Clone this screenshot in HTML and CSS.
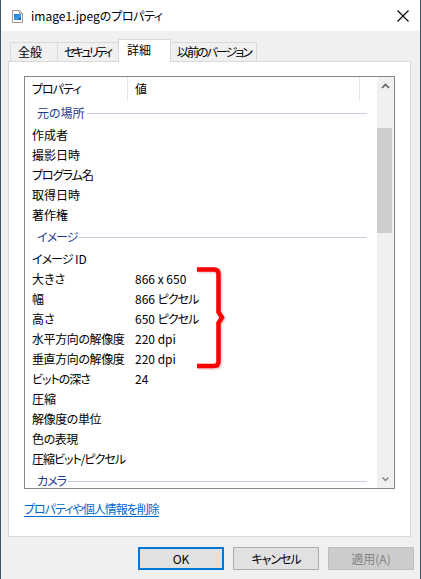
FILE: index.html
```html
<!DOCTYPE html>
<html lang="ja">
<head>
<meta charset="utf-8">
<title>image1.jpegのプロパティ</title>
<link rel="stylesheet" href="styles.css">
</head>
<body>
<div class="window">
  <div class="titlebar">
    <svg class="app-icon" width="11" height="13" viewBox="0 0 11 13">
      <defs>
        <linearGradient id="pic" x1="0" y1="0" x2="1" y2="1">
          <stop offset="0" stop-color="#1f6fd0"/>
          <stop offset="0.6" stop-color="#3aa0e8"/>
          <stop offset="1" stop-color="#0b3f8a"/>
        </linearGradient>
      </defs>
      <path d="M0.5 0.5 H7.5 L10.5 3.5 V12.5 H0.5 Z" fill="#fff" stroke="#9a9a9a"/>
      <path d="M7.5 0.5 V3.5 H10.5" fill="none" stroke="#9a9a9a"/>
      <rect x="2" y="4" width="7" height="6" fill="url(#pic)"/>
    </svg>
    <span class="title">image1.jpegの<span class="kn">プロパティ</span></span>
    <svg class="close" width="12" height="12" viewBox="0 0 12 12">
      <path d="M0.5 0.5 L11.5 11.5 M11.5 0.5 L0.5 11.5" stroke="#000" stroke-width="1.1" fill="none"/>
    </svg>
  </div>
  <div class="client">
    <div class="tabs">
      <div class="tab t1">全般</div>
      <div class="tab t2 kn">セキュリティ</div>
      <div class="tab t3 selected">詳細</div>
      <div class="tab t4 kn">以前のバージョン</div>
    </div>
    <div class="panel">
      <div class="listbox">
        <div class="list">
          <div class="header"><div class="hcol1 kn">プロパティ</div><div class="hcol2">値</div><div class="hcol3"></div></div>
          <div class="group"><span>元の場所</span><i></i></div>
          <div class="row"><span class="k">作成者</span><span class="v"></span></div>
          <div class="row"><span class="k">撮影日時</span><span class="v"></span></div>
          <div class="row"><span class="k kn">プログラム名</span><span class="v"></span></div>
          <div class="row"><span class="k">取得日時</span><span class="v"></span></div>
          <div class="row"><span class="k">著作権</span><span class="v"></span></div>
          <div class="group"><span class="kn">イメージ</span><i></i></div>
          <div class="row"><span class="k"><span class="kn">イメージ</span>&nbsp;ID</span><span class="v"></span></div>
          <div class="row"><span class="k">大きさ</span><span class="v">866 x 650</span></div>
          <div class="row"><span class="k">幅</span><span class="v">866 <span class="kn">ピクセル</span></span></div>
          <div class="row"><span class="k">高さ</span><span class="v">650 <span class="kn">ピクセル</span></span></div>
          <div class="row"><span class="k kj">水平方向の解像度</span><span class="v">220 dpi</span></div>
          <div class="row"><span class="k kj">垂直方向の解像度</span><span class="v">220 dpi</span></div>
          <div class="row"><span class="k kn">ビットの深さ</span><span class="v">24</span></div>
          <div class="row"><span class="k">圧縮</span><span class="v"></span></div>
          <div class="row"><span class="k kj">解像度の単位</span><span class="v"></span></div>
          <div class="row"><span class="k kj">色の表現</span><span class="v"></span></div>
          <div class="row"><span class="k kn">圧縮ビット/ピクセル</span><span class="v"></span></div>
          <div class="group"><span class="kn">カメラ</span><i></i></div>
        </div>
        <div class="scrollbar">
          <div class="sb-btn">
            <svg width="9" height="6" viewBox="0 0 9 6"><path d="M1 5 L4.5 1.5 L8 5" fill="none" stroke="#606060" stroke-width="1.6"/></svg>
          </div>
          <div class="sb-thumb"></div>
          <div class="sb-btn sb-down">
            <svg width="9" height="6" viewBox="0 0 9 6"><path d="M1.5 1.5 L4.5 4.5 L7.5 1.5" fill="none" stroke="#808080" stroke-width="1.4"/></svg>
          </div>
        </div>
        <svg class="brace" width="30" height="108" viewBox="0 0 30 108">
          <path d="M2 5.5 H19 Q23.5 5.5 23.5 10 V48 L27 53.5 L23.5 59 V97.5 Q23.5 102 19 102 H2" fill="none" stroke="#ff0000" stroke-width="4.5" stroke-linejoin="miter"/>
        </svg>
      </div>
      <a class="link kn" href="#">プロパティや個人情報を削除</a>
    </div>
    <div class="buttons">
      <div class="btn btn-default">OK</div>
      <div class="btn kn">キャンセル</div>
      <div class="btn btn-disabled">適用(A)</div>
    </div>
  </div>
</div>
</body>
</html>
```
FILE: styles.css
```css
html, body {
  margin: 0;
  padding: 0;
}
body {
  font-family: "Noto Sans CJK JP", "Noto Sans", sans-serif;
  font-size: 12px;
  font-feature-settings: "palt";
  color: #000;
  background: #f0f0f0;
}
.kn {
  letter-spacing: -1px;
}
.kj {
  letter-spacing: -0.4px;
}
.window {
  width: 421px;
  height: 579px;
  box-sizing: border-box;
  border-left: 1px solid #3e5463;
  border-right: 1px solid #3e5463;
  background: #f0f0f0;
  overflow: hidden;
}
.titlebar {
  height: 31px;
  background: #fff;
  display: flex;
  align-items: center;
}
.app-icon {
  margin-left: 11px;
  margin-top: 1px;
}
.title {
  margin-left: 8px;
  line-height: 16px;
  font-size: 12px;
}
.title .kn {
  letter-spacing: -0.5px;
}
.close {
  margin-left: auto;
  margin-right: 11px;
  margin-top: 1px;
}
.client {
  padding-top: 8px;
}
.tabs {
  display: flex;
  align-items: flex-end;
  height: 22px;
  padding-left: 9px;
  position: relative;
  z-index: 2;
}
.tab {
  box-sizing: border-box;
  height: 19px;
  border: 1px solid #d9d9d9;
  border-bottom: none;
  background: #f0f0f0;
  line-height: 17px;
  padding-left: 7px;
  margin-left: -1px;
  white-space: nowrap;
}
.tab.kn {
  letter-spacing: -2px;
}
.t1 { width: 48px; margin-left: 0; }
.t2 { width: 62px; padding-left: 6px; }
.tab.t2 { letter-spacing: -2.6px; }
.t3 { width: 53px; }
.t4 { width: 87px; padding-left: 6px; }
.tab.selected {
  height: 23px;
  margin-bottom: -1px;
  background: #fff;
  padding-left: 8px;
  line-height: 20px;
  position: relative;
  z-index: 3;
}
.panel {
  box-sizing: border-box;
  margin-left: 7px;
  width: 403px;
  height: 476px;
  border: 1px solid #d9d9d9;
  background: #fff;
  padding: 14px 15px 0;
  position: relative;
  z-index: 1;
}
.listbox {
  box-sizing: border-box;
  width: 371px;
  height: 413px;
  border: 1px solid #828790;
  display: flex;
  position: relative;
  background: #fff;
}
.list {
  flex: 1;
  overflow: hidden;
}
.header {
  display: flex;
  height: 24px;
  line-height: 24px;
}
.hcol1 {
  box-sizing: border-box;
  width: 103px;
  padding-left: 7px;
  border-right: 1px solid #e5e5e5;
}
.hcol2 {
  box-sizing: border-box;
  width: 232px;
  padding-left: 7px;
  border-right: 1px solid #e5e5e5;
}
.hcol3 {
  flex: 1;
}
.group {
  display: flex;
  align-items: center;
  height: 24px;
  padding-left: 12px;
  padding-right: 10px;
  color: #1e3a8f;
}
.group span {
  line-height: 16px;
}
.group i {
  flex: 1;
  height: 1px;
  background: #c3cde0;
  margin-left: 2px;
}
.row {
  display: flex;
  align-items: center;
  height: 20px;
  line-height: 16px;
  white-space: nowrap;
}
.k {
  box-sizing: border-box;
  width: 110px;
  padding-left: 7px;
}
.k .kn {
  letter-spacing: -1px;
}
.v {
  flex: 1;
}
.scrollbar {
  width: 17px;
  background: #f0f0f0;
  display: flex;
  flex-direction: column;
}
.sb-btn {
  height: 17px;
  display: flex;
  align-items: center;
  justify-content: center;
}
.sb-btn svg {
  display: block;
}
.sb-thumb {
  margin-top: 34px;
  height: 105px;
  margin-right: 2px;
  background: #cdcdcd;
}
.sb-down {
  margin-top: auto;
  margin-bottom: 1px;
}
.brace {
  position: absolute;
  left: 170px;
  top: 187px;
  filter: drop-shadow(1px 1px 1px rgba(120, 0, 0, 0.25));
}
.link {
  display: inline-block;
  margin-top: 12px;
  line-height: 16px;
  color: #0066cc;
  text-decoration: underline;
  text-underline-offset: 2px;
}
.buttons {
  display: flex;
  justify-content: flex-end;
  gap: 9px;
  margin-top: 10px;
  padding-right: 6px;
}
.btn {
  box-sizing: border-box;
  width: 86px;
  height: 23px;
  border: 1px solid #adadad;
  background: #e1e1e1;
  display: flex;
  align-items: center;
  justify-content: center;
  line-height: 16px;
}
.btn-default {
  border: 2px solid #0078d7;
}
.btn-disabled {
  background: #cccccc;
  border-color: #bfbfbf;
  color: #838383;
}
```
